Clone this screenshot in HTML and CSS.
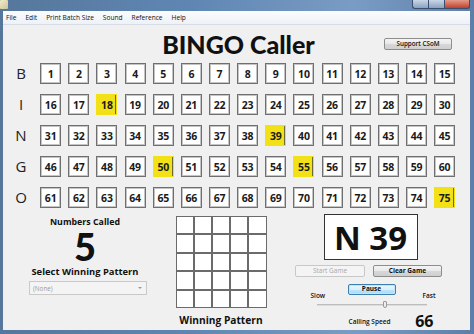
FILE: index.html
```html
<!DOCTYPE html>
<html>
<head>
<meta charset="utf-8">
<link rel="stylesheet" href="styles.css">
<title>BINGO Caller</title>
</head>
<body>
<div class="window">
  <div class="titlebar">
    <span class="app-icon"></span>
    <div class="caption-buttons">
      <span class="cb cb-min"></span>
      <span class="cb cb-max"></span>
      <span class="cb cb-close"></span>
    </div>
  </div>
  <div class="menubar">
    <span class="menu-item">File</span>
    <span class="menu-item">Edit</span>
    <span class="menu-item">Print Batch Size</span>
    <span class="menu-item">Sound</span>
    <span class="menu-item">Reference</span>
    <span class="menu-item">Help</span>
  </div>
  <div class="content">
    <div class="header">
      <h1 class="title">BINGO Caller</h1>
      <button class="btn support">Support CSoM</button>
    </div>
    <div class="board" id="board"></div>
    <div class="bottom">
      <div class="stats">
        <div class="label-bold">Numbers Called</div>
        <div class="count">5</div>
        <div class="label-bold select-label">Select Winning Pattern</div>
        <div class="dropdown"><span>(None)</span><span class="arrow"></span></div>
      </div>
      <div class="pattern-col">
        <div class="pattern" id="pattern"></div>
        <div class="pattern-label">Winning Pattern</div>
      </div>
      <div class="controls">
        <div class="current">N 39</div>
        <div class="btn-row">
          <button class="btn start" disabled>Start Game</button>
          <button class="btn clear">Clear Game</button>
        </div>
        <div class="speed">
          <span class="slow">Slow</span>
          <button class="btn pause">Pause</button>
          <span class="fast">Fast</span>
          <div class="track"><span class="thumb"></span></div>
          <span class="speed-label">Calling Speed</span>
          <span class="speed-value">66</span>
        </div>
      </div>
    </div>
  </div>
</div>
<script>
(function () {
  var letters = ["B", "I", "N", "G", "O"];
  var called = [18, 39, 50, 55, 75];
  var board = document.getElementById("board");
  letters.forEach(function (l, r) {
    var row = document.createElement("div");
    row.className = "row";
    var s = document.createElement("span");
    s.className = "letter";
    s.textContent = l;
    row.appendChild(s);
    for (var c = 1; c <= 15; c++) {
      var n = r * 15 + c;
      var cell = document.createElement("span");
      cell.className = "cell" + (called.indexOf(n) >= 0 ? " called" : "");
      cell.textContent = n;
      row.appendChild(cell);
    }
    board.appendChild(row);
  });
  var p = document.getElementById("pattern");
  for (var i = 0; i < 25; i++) {
    var d = document.createElement("span");
    d.className = "pcell";
    p.appendChild(d);
  }
})();
</script>
</body>
</html>
```

FILE: styles.css
```css
* { box-sizing: border-box; }
html, body { margin: 0; padding: 0; }
body {
  width: 474px;
  height: 334px;
  overflow: hidden;
  font-family: "Lato", "Open Sans", sans-serif;
  background: #4f78a6;
}
.window {
  width: 474px;
  height: 334px;
  display: flex;
  flex-direction: column;
  background: linear-gradient(90deg, #56779c 0%, #5f86b3 40%, #7a9cc4 75%, #5c7ea8 100%);
  padding: 0 4px 4px 3px;
}
.titlebar {
  height: 11px;
  display: flex;
  align-items: flex-start;
  justify-content: space-between;
  margin-left: -3px;
  margin-right: -4px;
}
.app-icon {
  width: 8px;
  height: 9px;
  background: linear-gradient(135deg, #f3ecc6, #c9c29a);
  border-radius: 1px;
}
.caption-buttons {
  display: flex;
  margin-right: 4px;
}
.cb {
  height: 9px;
  border: 1px solid #3a4f6d;
  border-top: none;
}
.cb-min, .cb-max {
  width: 16px;
  background: linear-gradient(#c9d6e6, #8aa2c2);
  border-right: none;
}
.cb-min { border-radius: 0 0 0 3px; }
.cb-close {
  width: 26px;
  background: linear-gradient(#e49a8a, #c2412b);
  border-radius: 0 0 3px 0;
}
.menubar {
  height: 14px;
  display: flex;
  align-items: center;
  gap: 9px;
  padding-left: 3px;
  background: linear-gradient(#fbfcfd, #eef1f6);
  border-bottom: 1px solid #d7dde7;
  font-family: "Open Sans", sans-serif;
  font-size: 6.6px;
  color: #111;
}
.content {
  flex: 1;
  background: #f0f0f0;
  display: flex;
  flex-direction: column;
}
.header {
  height: 38px;
  display: grid;
  grid-template-columns: 1fr auto 1fr;
  align-items: center;
}
.title {
  grid-column: 2;
  margin: 0;
  font-family: "Lato", sans-serif;
  font-weight: 900;
  font-size: 25px;
  color: #111;
  line-height: 1;
  position: relative;
  left: 2px;
}
.btn {
  font-family: "Open Sans", sans-serif;
  font-size: 6.5px;
  color: #111;
  padding: 0;
  border: 1px solid #8d8d8d;
  border-radius: 2px;
  background: linear-gradient(#f4f4f4 0%, #e8e8e8 50%, #d8d8d8 51%, #cfcfcf 100%);
  line-height: 1;
  display: flex;
  align-items: center;
  justify-content: center;
}
.support {
  grid-column: 3;
  justify-self: end;
  margin-right: 18px;
  width: 68px;
  height: 12px;
  font-weight: 600;
  font-size: 6.3px;
}
.board {
  display: flex;
  flex-direction: column;
  gap: 10px;
  padding-left: 6px;
}
.row {
  display: grid;
  grid-template-columns: 24px repeat(15, 21px);
  column-gap: 7.15px;
  height: 21px;
  align-items: center;
}
.letter {
  font-family: "Open Sans", sans-serif;
  font-size: 15px;
  color: #222;
  text-align: center;
  line-height: 1;
}
.cell {
  height: 21px;
  display: flex;
  align-items: center;
  justify-content: center;
  background: #fff;
  border: 1px solid #6f6f6f;
  box-shadow: inset 0 0 0 1px #c4c4c4;
  font-family: "Open Sans", sans-serif;
  font-weight: 700;
  font-size: 10.5px;
  color: #1a1a1a;
  letter-spacing: -0.2px;
}
.cell.called {
  background: #f1e116;
  border-color: #f1e116;
  box-shadow: inset -1px 0 0 #6d6a3a;
}
.bottom {
  display: flex;
  margin-top: 6px;
}
.stats {
  width: 164px;
  display: flex;
  flex-direction: column;
  align-items: center;
  padding-top: 4px;
}
.label-bold {
  font-family: "Open Sans", sans-serif;
  font-weight: 700;
  font-size: 8.8px;
  color: #111;
  line-height: 1.1;
}
.count {
  font-family: "Lato", sans-serif;
  font-weight: 900;
  font-size: 38px;
  line-height: 30px;
  height: 30px;
  margin-top: 3px;
  color: #111;
}
.select-label {
  font-size: 9.4px;
  margin-top: 6px;
}
.dropdown {
  width: 118px;
  height: 14px;
  margin-top: 4px;
  margin-left: 6px;
  border: 1px solid #c9c9c9;
  background: #f4f4f4;
  display: flex;
  align-items: center;
  justify-content: space-between;
  padding: 0 4px 0 3px;
  font-family: "Open Sans", sans-serif;
  font-size: 6.3px;
  color: #9a9a9a;
}
.arrow {
  width: 0;
  height: 0;
  border-left: 2px solid transparent;
  border-right: 2px solid transparent;
  border-top: 2px solid #999;
}
.pattern-col {
  width: 92px;
  margin-left: 8px;
  display: flex;
  flex-direction: column;
  align-items: center;
  padding-top: 2px;
}
.pattern {
  width: 91px;
  height: 92px;
  display: grid;
  grid-template-columns: repeat(5, 1fr);
  grid-template-rows: repeat(5, 1fr);
  gap: 2px;
  padding: 1px;
  background: #6b6b6b;
}
.pcell { background: #fff; }
.pattern-label {
  font-family: "Open Sans", sans-serif;
  font-weight: 700;
  font-size: 10.2px;
  color: #111;
  margin-top: 7px;
  line-height: 1;
}
.controls {
  flex: 1;
  display: flex;
  flex-direction: column;
  align-items: center;
  padding-left: 4px;
}
.current {
  width: 94px;
  height: 46px;
  border: 1px solid #333;
  background: #fff;
  display: flex;
  align-items: center;
  justify-content: center;
  font-family: "Open Sans", sans-serif;
  font-weight: 700;
  font-size: 33px;
  color: #111;
  line-height: 1;
}
.btn-row {
  display: flex;
  gap: 8px;
  margin-top: 5px;
  margin-left: -4px;
}
.start, .clear {
  width: 70px;
  height: 12px;
}
.start {
  background: #f4f4f4;
  border-color: #c8c8c8;
  color: #a8a8a8;
}
.clear { font-weight: 700; width: 69px; }
.speed {
  display: grid;
  grid-template-columns: 36px 54px 36px;
  grid-template-rows: 11px 6px 8px 19px;
  width: 126px;
  margin-top: 7px;
  margin-left: 6px;
  font-family: "Open Sans", sans-serif;
  font-weight: 600;
  font-size: 6.5px;
  color: #111;
}
.slow { grid-column: 1; grid-row: 1 / 3; align-self: end; margin-bottom: 1px; }
.fast { grid-column: 3; grid-row: 1 / 3; align-self: end; justify-self: end; margin-bottom: 1px; margin-right: 1px; }
.pause {
  grid-column: 2;
  grid-row: 1;
  justify-self: center;
  width: 48px;
  height: 11px;
  font-weight: 700;
  border-color: #3c7fb1;
  background: linear-gradient(#eaf6fd 0%, #d9f0fc 50%, #bee6fd 51%, #a7d9f5 100%);
  box-shadow: inset 0 0 0 1px #c5e4f6;
  margin-left: -4px;
}
.track {
  grid-column: 1 / 4;
  grid-row: 3;
  margin: 0 10px 0 6px;
  height: 2px;
  align-self: center;
  background: #dcdcdc;
  border-top: 1px solid #bdbdbd;
  position: relative;
}
.thumb {
  position: absolute;
  left: 66px;
  top: -4px;
  width: 4px;
  height: 7px;
  background: #eee;
  border: 1px solid #999;
  border-radius: 1px 1px 2px 2px;
}
.speed-label {
  grid-column: 1 / 3;
  grid-row: 4;
  justify-self: end;
  align-self: end;
  margin-right: 10px;
  margin-bottom: 2px;
  font-size: 6.5px;
}
.speed-value {
  grid-column: 3;
  grid-row: 4;
  justify-self: end;
  align-self: end;
  margin-right: 3px;
  font-weight: 700;
  font-size: 16px;
  line-height: 1;
  margin-bottom: -1px;
}
```
